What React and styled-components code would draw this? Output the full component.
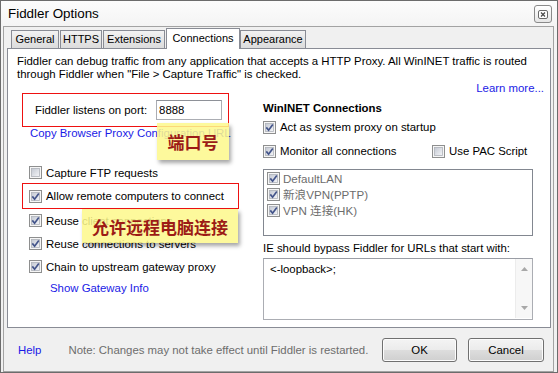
import React from "react"
import styled, { createGlobalStyle } from "styled-components"

const GlobalStyle = createGlobalStyle`
	html, body {
		margin: 0;
		padding: 0;
		background: #ffffff;
	}
	body {
		font-family: "Liberation Sans", "Noto Sans CJK SC", sans-serif;
		font-size: 11.4px;
		color: #000;
	}
	* {
		box-sizing: border-box;
	}
`

const Window = styled.div`
	width: 558px;
	height: 373px;
	border: 1px solid #6c6c6c;
	background: linear-gradient(#fcfcfc, #f4f4f4 26px, #f0f0f0);
	display: flex;
	flex-direction: column;
`

const TitleBar = styled.div`
	height: 25px;
	display: flex;
	justify-content: space-between;
	align-items: flex-start;
	padding: 0 5px 0 7px;
`

const Title = styled.div`
	font-size: 13.4px;
	line-height: 25px;
`

const CloseButton = styled.div`
	margin-top: 4px;
	width: 18px;
	height: 18px;
	border: 1px solid #8a8a8a;
	border-radius: 3px;
	background: linear-gradient(#ffffff, #e6e6e6);
	display: flex;
	align-items: center;
	justify-content: center;
`

const Client = styled.div`
	margin: 0 3px 0 2px;
	height: 346px;
	border: 1px solid #a3a3a3;
	background: #f0f0f0;
	display: flex;
	flex-direction: column;
`

const TabStrip = styled.div`
	margin-top: 1px;
	height: 20px;
	padding-left: 7px;
	display: flex;
	align-items: flex-end;
`

const Tab = styled.div`
	width: ${(p) => p.$w}px;
	height: ${(p) => (p.$active ? 21 : 18)}px;
	margin-bottom: ${(p) => (p.$active ? -1 : 0)}px;
	margin-right: ${(p) => (p.$active ? 0 : 1)}px;
	position: relative;
	z-index: ${(p) => (p.$active ? 2 : 0)};
	border: 1px solid #898c95;
	border-bottom: none;
	background: ${(p) =>
		p.$active ? "#ffffff" : "linear-gradient(#f3f3f3, #e6e6e6 50%, #dcdcdc)"};
	font-size: 11px;
	line-height: ${(p) => (p.$active ? 18 : 17)}px;
	text-align: center;
	white-space: nowrap;
`

const Panel = styled.div`
	margin: 0 2px 0 3px;
	height: 280px;
	border: 1px solid #898c95;
	background: #ffffff;
	position: relative;
	z-index: 1;
`

const Intro = styled.p`
	margin: 0;
	padding: 6px 0 0 9px;
	line-height: 13px;
`

const LearnRow = styled.div`
	margin-top: 1px;
	padding-right: 6px;
	line-height: 13px;
	text-align: right;
`

const Link = styled.span`
	color: #1a1ae6;
	padding-left: ${(p) => p.$indent || 0}px;
`

const Columns = styled.div`
	margin-top: -2px;
	padding-left: 14px;
	display: grid;
	grid-template-columns: 241px 270px;
`

const LeftCol = styled.div`
	position: relative;
	display: flex;
	flex-direction: column;
`

const RightCol = styled.div`
	display: flex;
	flex-direction: column;
`

const PortBox = styled.div`
	width: 207px;
	height: 34px;
	border: 1px solid #ee1111;
	padding-left: 12px;
	display: flex;
	align-items: center;
	gap: 9px;
`

const PortInput = styled.div`
	width: 66px;
	height: 20px;
	border: 1px solid #abadb3;
	border-top-color: #8e9198;
	padding-left: 2px;
	line-height: 18px;
	background: #fff;
`

const CopyLink = styled.div`
	line-height: 13px;
	padding-left: 8px;
	white-space: nowrap;
`

const CheckRow = styled.div`
	height: ${(p) => p.$h || 23}px;
	margin-top: ${(p) => p.$mt || 0}px;
	padding-left: ${(p) => (p.$pad === undefined ? 7 : p.$pad)}px;
	display: flex;
	align-items: center;
	gap: 4px;
	white-space: nowrap;
`

const RedBox = styled.div`
	width: 217px;
	height: 26px;
	border: 1px solid #ee1111;
	padding-left: 6px;
	display: flex;
	align-items: center;
	gap: 4px;
	white-space: nowrap;
`

const GatewayLink = styled.div`
	line-height: 20px;
	padding-left: 28px;
`

const Heading = styled.div`
	margin-top: 8px;
	line-height: 14px;
	font-weight: bold;
`

const CheckItem = styled.div`
	width: ${(p) => (p.$w ? `${p.$w}px` : "auto")};
	display: flex;
	align-items: center;
	gap: 4px;
	white-space: nowrap;
`

const ListBox = styled.div`
	margin-top: 6px;
	height: 67px;
	border: 1px solid #828790;
	background: #fff;
	padding-left: 3px;
`

const ListItem = styled.div`
	height: 16px;
	display: flex;
	align-items: center;
	gap: 3px;
	color: #6d6d6d;
	font-size: 11.6px;
	white-space: nowrap;
`

const Label = styled.div`
	margin-top: 5px;
	line-height: 14px;
	white-space: nowrap;
`

const TextArea = styled.div`
	margin-top: 3px;
	height: 62px;
	border: 1px solid #abadb3;
	border-top-color: #9a9da5;
	background: #fff;
	display: flex;
`

const TextContent = styled.div`
	flex: 1;
	padding: 4px 0 0 6px;
	line-height: 13px;
`

const ScrollBar = styled.div`
	width: 17px;
	margin: 0 0 1px 0;
	border-left: 1px solid #ececec;
	background: #f7f7f7;
	display: flex;
	flex-direction: column;
	justify-content: space-between;
	align-items: center;
	padding: 8px 0 8px;
`

const Tooltip = styled.div`
	position: absolute;
	left: ${(p) => p.$x}px;
	top: ${(p) => p.$y}px;
	width: ${(p) => p.$w}px;
	height: ${(p) => p.$h}px;
	background: rgba(253, 248, 140, 0.86);
	box-shadow: 2px 3px 4px rgba(0, 0, 0, 0.35);
	display: flex;
	align-items: center;
	justify-content: center;
	color: #9c1b16;
	font-family: "Noto Sans CJK SC", sans-serif;
	font-size: 17px;
	font-weight: bold;
	white-space: nowrap;
`

const Footer = styled.div`
	flex: 1;
	display: flex;
	align-items: center;
	padding: 0 9px 0 14px;
`

const Note = styled.div`
	margin-left: 27px;
	color: #6d6d6d;
	white-space: nowrap;
`

const Buttons = styled.div`
	margin-left: auto;
	display: flex;
	gap: 11px;
`

const Button = styled.div`
	width: ${(p) => p.$w}px;
	height: 24px;
	border: 1px solid #707070;
	border-radius: 3px;
	background: linear-gradient(#f4f4f4, #ebebeb 50%, #dddddd 51%, #cfcfcf);
	box-shadow: inset 0 0 0 1px #fcfcfc;
	display: flex;
	align-items: center;
	justify-content: center;
`

const Checkbox = ({ checked }) => (
	<svg width="13" height="13" viewBox="0 0 13 13" style={{ flex: "none" }}>
		<defs>
			<linearGradient id="cbfill" x1="0" y1="0" x2="1" y2="1">
				<stop offset="0" stopColor="#c3c8d2" />
				<stop offset="1" stopColor="#f4f5f8" />
			</linearGradient>
		</defs>
		<rect x="0.5" y="0.5" width="12" height="12" fill="#f6f6f6" stroke="#8e8f8f" />
		<rect x="2.5" y="2.5" width="8" height="8" fill="url(#cbfill)" stroke="#aeb2ba" strokeWidth="0.8" />
		{checked && (
			<path d="M3.3 6.4 L5.6 9.2 L9.8 3.4" fill="none" stroke="#43548a" strokeWidth="1.7" />
		)}
	</svg>
)

const CloseIcon = () => (
	<svg width="10" height="9" viewBox="0 0 10 9">
		<rect x="0.5" y="0.5" width="9" height="8" rx="1.5" fill="#fff" stroke="#6a6a6a" />
		<path d="M3 2.5 L7 6.5 M7 2.5 L3 6.5" stroke="#4a4a4a" strokeWidth="1.2" />
	</svg>
)

const Arrow = ({ up }) => (
	<svg width="7" height="4" viewBox="0 0 7 4">
		<path d={up ? "M0 4 L3.5 0 L7 4 Z" : "M0 0 L3.5 4 L7 0 Z"} fill="#a8a8a8" />
	</svg>
)

const tabs = [
	{ name: "General", w: 48 },
	{ name: "HTTPS", w: 42 },
	{ name: "Extensions", w: 62 },
	{ name: "Connections", w: 74, active: true },
	{ name: "Appearance", w: 66 },
]

const connections = ["DefaultLAN", "新浪VPN(PPTP)", "VPN 连接(HK)"]

const App = () => {
	return (
		<>
			<GlobalStyle />
			<Window>
				<TitleBar>
					<Title>Fiddler Options</Title>
					<CloseButton>
						<CloseIcon />
					</CloseButton>
				</TitleBar>
				<Client>
					<TabStrip>
						{tabs.map((t) => (
							<Tab key={t.name} $w={t.w} $active={t.active}>
								{t.name}
							</Tab>
						))}
					</TabStrip>
					<Panel>
						<Intro>
							Fiddler can debug traffic from any application that accepts a HTTP Proxy. All
							WinINET traffic is routed
							<br />
							through Fiddler when "File &gt; Capture Traffic" is checked.
						</Intro>
						<LearnRow>
							<Link>Learn more...</Link>
						</LearnRow>
						<Columns>
							<LeftCol>
								<PortBox>
									<span>Fiddler listens on port:</span>
									<PortInput>8888</PortInput>
								</PortBox>
								<CopyLink>
									<Link>Copy Browser Proxy Configuration URL</Link>
								</CopyLink>
								<CheckRow $mt={22} $h={21}>
									<Checkbox />
									<span>Capture FTP requests</span>
								</CheckRow>
								<RedBox>
									<Checkbox checked />
									<span>Allow remote computers to connect</span>
								</RedBox>
								<CheckRow>
									<Checkbox checked />
									<span>Reuse client connections</span>
								</CheckRow>
								<CheckRow>
									<Checkbox checked />
									<span>Reuse connections to servers</span>
								</CheckRow>
								<CheckRow>
									<Checkbox checked />
									<span>Chain to upstream gateway proxy</span>
								</CheckRow>
								<GatewayLink>
									<Link>Show Gateway Info</Link>
								</GatewayLink>
								<Tooltip $x={135} $y={30} $w={72} $h={37}>
									端口号
								</Tooltip>
								<Tooltip $x={60} $y={116} $w={156} $h={34}>
									允许远程电脑连接
								</Tooltip>
							</LeftCol>
							<RightCol>
								<Heading>WinINET Connections</Heading>
								<CheckRow $h={24} $pad={0}>
									<Checkbox checked />
									<span>Act as system proxy on startup</span>
								</CheckRow>
								<CheckRow $h={24} $pad={0}>
									<CheckItem $w={165}>
										<Checkbox checked />
										<span>Monitor all connections</span>
									</CheckItem>
									<CheckItem>
										<Checkbox />
										<span>Use PAC Script</span>
									</CheckItem>
								</CheckRow>
								<ListBox>
									{connections.map((c) => (
										<ListItem key={c}>
											<Checkbox checked />
											<span>{c}</span>
										</ListItem>
									))}
								</ListBox>
								<Label>IE should bypass Fiddler for URLs that start with:</Label>
								<TextArea>
									<TextContent>&lt;-loopback&gt;;</TextContent>
									<ScrollBar>
										<Arrow up />
										<Arrow />
									</ScrollBar>
								</TextArea>
							</RightCol>
						</Columns>
					</Panel>
					<Footer>
						<Link>Help</Link>
						<Note>Note: Changes may not take effect until Fiddler is restarted.</Note>
						<Buttons>
							<Button $w={75}>OK</Button>
							<Button $w={76}>Cancel</Button>
						</Buttons>
					</Footer>
				</Client>
			</Window>
		</>
	)
}

export default App
